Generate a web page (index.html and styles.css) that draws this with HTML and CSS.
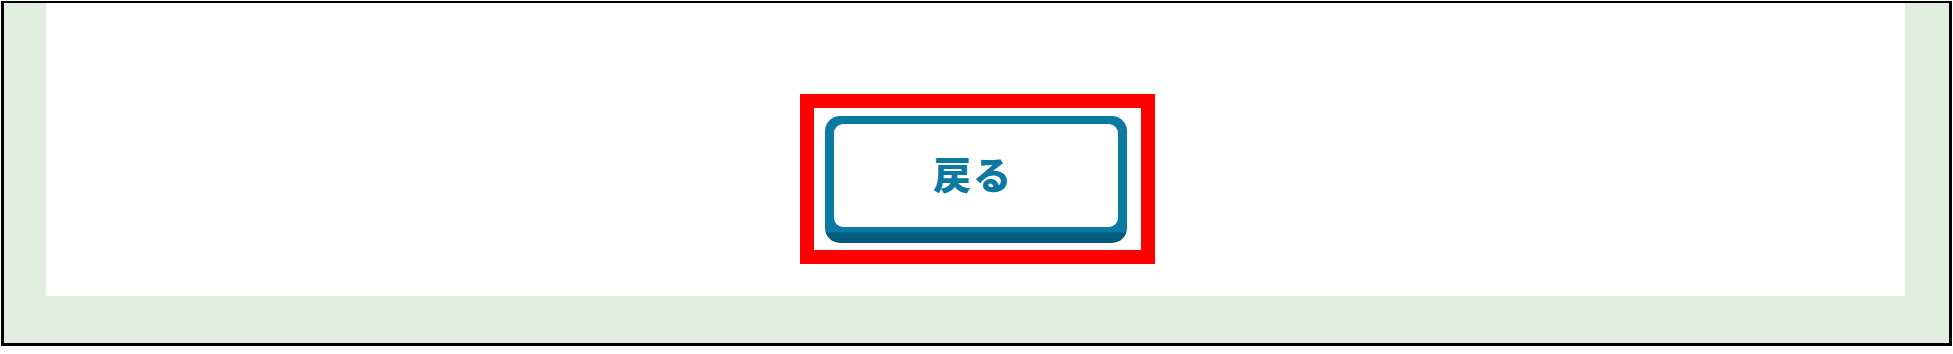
FILE: index.html
```html
<!DOCTYPE html>
<html lang="ja">
<head>
<meta charset="utf-8">
<title>戻る</title>
<link rel="stylesheet" href="styles.css">
</head>
<body>
<div class="frame">
  <div class="content">
    <div class="highlight">
      <button class="back-btn" type="button">
        <span class="back-inner"><span class="back-label">戻る</span></span>
      </button>
    </div>
  </div>
</div>
</body>
</html>
```

FILE: styles.css
```css
html, body {
  margin: 0;
  padding: 0;
  background: #ffffff;
}

body {
  width: 1953px;
  height: 354px;
  overflow: hidden;
  font-family: "Noto Sans CJK JP", "Noto Sans", sans-serif;
}

.frame {
  box-sizing: border-box;
  margin: 1px 0 0 1px;
  width: 1951px;
  height: 345px;
  border-style: solid;
  border-color: #000000;
  border-width: 2px 3px 3px 3px;
  background: #dfeedd;
  padding: 0 44px 47px 42px;
}

.content {
  box-sizing: border-box;
  height: 100%;
  background: #ffffff;
  display: flex;
  justify-content: center;
  align-items: flex-start;
  padding-top: 91px;
  padding-left: 4px;
}

.highlight {
  box-sizing: border-box;
  width: 355px;
  height: 170px;
  border: 14px solid #ff0000;
  background: #ffffff;
  padding: 8px 14px 7px 11px;
}

.back-btn {
  display: block;
  box-sizing: border-box;
  width: 302px;
  height: 127px;
  margin: 0;
  border: 0;
  border-radius: 15px;
  padding: 8px 9px 16px 9px;
  background: linear-gradient(to bottom, #0a7aa2 0%, #0a7aa2 91%, #03607f 92%, #02587a 100%);
  cursor: pointer;
  font-family: inherit;
}

.back-inner {
  box-sizing: border-box;
  display: flex;
  align-items: center;
  justify-content: center;
  width: 100%;
  height: 100%;
  background: #ffffff;
  border-radius: 9px;
  padding: 0 6px 6px 0;
}

.back-label {
  font-size: 38px;
  font-weight: 900;
  line-height: 1;
  color: #0b79a0;
  letter-spacing: 2px;
}
```
